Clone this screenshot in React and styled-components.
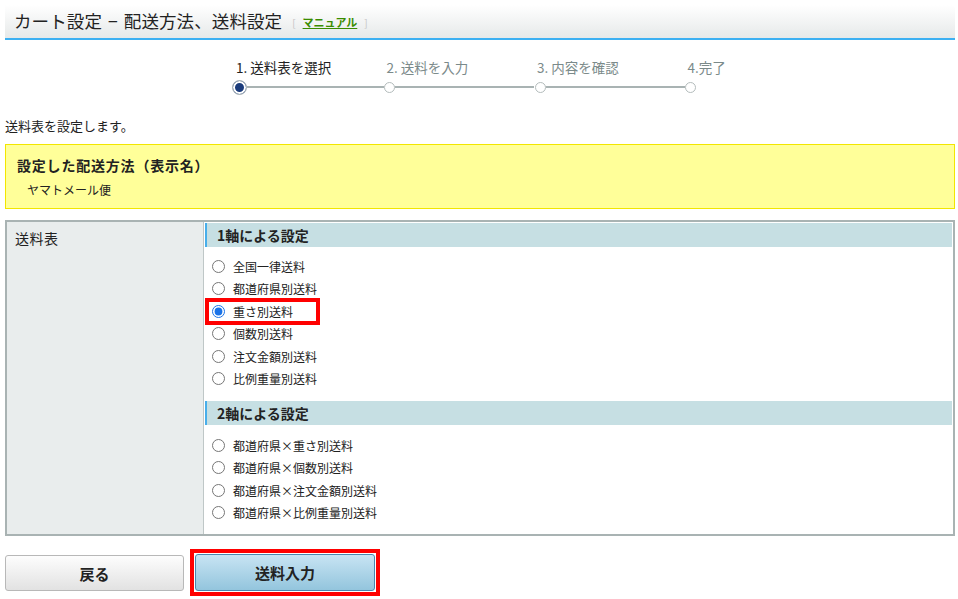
import React from "react";
import styled, { createGlobalStyle } from "styled-components";

const Global = createGlobalStyle`
  html, body {
    margin: 0;
    padding: 0;
    background: #fff;
  }
  body {
    font-family: "Noto Sans CJK JP", "Noto Sans", sans-serif;
    color: #222;
    font-size: 12px;
  }
  * { box-sizing: border-box; }
`;

const Page = styled.div`
  width: 958px;
  padding: 5px 3px 0 5px;
  display: flex;
  flex-direction: column;
`;

const Header = styled.div`
  height: 35px;
  display: flex;
  align-items: center;
  padding: 0 0 2px 9px;
  background: linear-gradient(#ffffff, #e6e9e9);
  border-bottom: 2px solid #3cb0f2;
  border-top-right-radius: 4px;
`;

const Title = styled.h1`
  margin: 0;
  font-size: 17.5px;
  font-weight: normal;
  line-height: 22px;
  color: #222;
  letter-spacing: 0.1px;

  span {
    margin: 0 6px;
  }
`;

const Manual = styled.span`
  margin-left: 10px;
  margin-top: 3px;
  font-size: 10px;
  color: #c4c4c4;
  display: flex;
  gap: 7px;
  align-items: center;

  a {
    color: #3a8c00;
    font-weight: bold;
    font-size: 11px;
    text-decoration: underline;
  }
`;

const Stepper = styled.div`
  display: flex;
  margin: 18px 0 0 228px;
`;

const Step = styled.div`
  width: ${(p) => (p.$last ? "60px" : "150.5px")};
  display: flex;
  flex-direction: column;
`;

const StepLabel = styled.div`
  height: 18px;
  line-height: 18px;
  font-size: 13.5px;
  padding-left: 3px;
  white-space: nowrap;
  color: ${(p) => (p.$active ? "#222" : "#7b8a8a")};
`;

const Track = styled.div`
  height: 14px;
  margin-top: 4px;
  display: flex;
  align-items: center;
`;

const Dot = styled.span`
  flex: none;
  width: ${(p) => (p.$active ? "15px" : "11px")};
  height: ${(p) => (p.$active ? "15px" : "11px")};
  margin-left: ${(p) => (p.$active ? "-1.5px" : "0.5px")};
  border-radius: 50%;
  border: 1px solid #b4bcbc;
  background: ${(p) => (p.$active ? "#1b3c7c" : "#fff")};
  box-shadow: ${(p) => (p.$active ? "inset 0 0 0 2px #fff" : "none")};
`;

const Line = styled.span`
  flex: 1;
  height: 2px;
  background: #a9b3b3;
`;

const Intro = styled.p`
  margin: 24px 0 0;
  line-height: 16px;
  font-size: 13px;
`;

const Notice = styled.div`
  margin-top: 10px;
  height: 65px;
  background: #ffff99;
  border: 1px solid #f2e600;
  padding: 10px 11px 0;
`;

const NoticeTitle = styled.div`
  font-size: 14px;
  font-weight: bold;
  line-height: 20px;
  letter-spacing: 0.8px;
  color: #222;
`;

const NoticeText = styled.div`
  margin: 6px 0 0 10px;
  font-size: 12px;
  line-height: 18px;
`;

const Table = styled.div`
  margin-top: 11px;
  border: 2px solid #a9b3b3;
  display: grid;
  grid-template-columns: 197px 1fr;
`;

const HeadCell = styled.div`
  background: #e9eded;
  border-right: 1px solid #bfc7c7;
  padding: 7px 8px;
  font-size: 14px;
  line-height: 18px;
  letter-spacing: 0.5px;
`;

const BodyCell = styled.div`
  padding: 1px 1px 0 1px;
`;

const Section = styled.div`
  height: 24px;
  background: #c6dfe3;
  border-left: 2px solid #48aeea;
  padding-left: 10px;
  font-size: 14px;
  font-weight: bold;
  line-height: 24px;
`;

const Options = styled.div`
  padding: ${(p) => p.$pad};
  display: flex;
  flex-direction: column;
`;

const Row = styled.div`
  height: 22.5px;
  display: flex;
  align-items: center;
  padding-left: 4px;
`;

const Choice = styled.label`
  height: 19px;
  display: inline-flex;
  align-items: center;
  gap: 8px;
  padding-left: 3px;
  font-size: 12px;
  width: ${(p) => (p.$mark ? "107px" : "auto")};
  outline: ${(p) => (p.$mark ? "4px solid #f00" : "none")};

  input {
    margin: 0;
    width: 13px;
    height: 13px;
    accent-color: #1a73e8;
  }
`;

const Buttons = styled.div`
  margin-top: 13px;
  display: flex;
  gap: 6px;
  align-items: center;
`;

const Mark = styled.span`
  display: inline-flex;
  padding: 1px;
  border: 4px solid #f00;
`;

const Button = styled.button`
  width: ${(p) => (p.$primary ? "180px" : "179px")};
  height: ${(p) => (p.$primary ? "37px" : "36px")};
  margin-top: ${(p) => (p.$primary ? "0" : "1px")};
  border-radius: 3px;
  font-family: inherit;
  font-size: 15px;
  font-weight: bold;
  color: #222;
  border: 1px solid ${(p) => (p.$primary ? "#4a86ae" : "#b8b8b8")};
  background: ${(p) =>
    p.$primary
      ? "linear-gradient(#c8e4f3, #93c5dd)"
      : "linear-gradient(#fdfdfd, #e2e2e2)"};
`;

const steps = ["1. 送料表を選択", "2. 送料を入力", "3. 内容を確認", "4.完了"];

const oneAxis = [
  "全国一律送料",
  "都道府県別送料",
  "重さ別送料",
  "個数別送料",
  "注文金額別送料",
  "比例重量別送料",
];

const twoAxis = [
  "都道府県×重さ別送料",
  "都道府県×個数別送料",
  "都道府県×注文金額別送料",
  "都道府県×比例重量別送料",
];

const Option = ({ label, checked }) => (
  <Row>
    <Choice $mark={checked}>
      <input type="radio" name="table" defaultChecked={checked} />
      {label}
    </Choice>
  </Row>
);

const App = () => {
  return (
    <>
      <Global />
      <Page>
        <Header>
          <Title>
            カート設定<span>−</span>配送方法、送料設定
          </Title>
          <Manual>
            [<a href="#">マニュアル</a>]
          </Manual>
        </Header>

        <Stepper>
          {steps.map((s, i) => (
            <Step key={s} $last={i === steps.length - 1}>
              <StepLabel $active={i === 0}>{s}</StepLabel>
              <Track>
                <Dot $active={i === 0} />
                {i < steps.length - 1 && <Line />}
              </Track>
            </Step>
          ))}
        </Stepper>

        <Intro>送料表を設定します。</Intro>

        <Notice>
          <NoticeTitle>設定した配送方法（表示名）</NoticeTitle>
          <NoticeText>ヤマトメール便</NoticeText>
        </Notice>

        <Table>
          <HeadCell>送料表</HeadCell>
          <BodyCell>
            <Section>1軸による設定</Section>
            <Options $pad="8px 0 11px">
              {oneAxis.map((o) => (
                <Option key={o} label={o} checked={o === "重さ別送料"} />
              ))}
            </Options>
            <Section>2軸による設定</Section>
            <Options $pad="9px 0 10px">
              {twoAxis.map((o) => (
                <Option key={o} label={o} />
              ))}
            </Options>
          </BodyCell>
        </Table>

        <Buttons>
          <Button>戻る</Button>
          <Mark>
            <Button $primary>送料入力</Button>
          </Mark>
        </Buttons>
      </Page>
    </>
  );
};

export default App;
